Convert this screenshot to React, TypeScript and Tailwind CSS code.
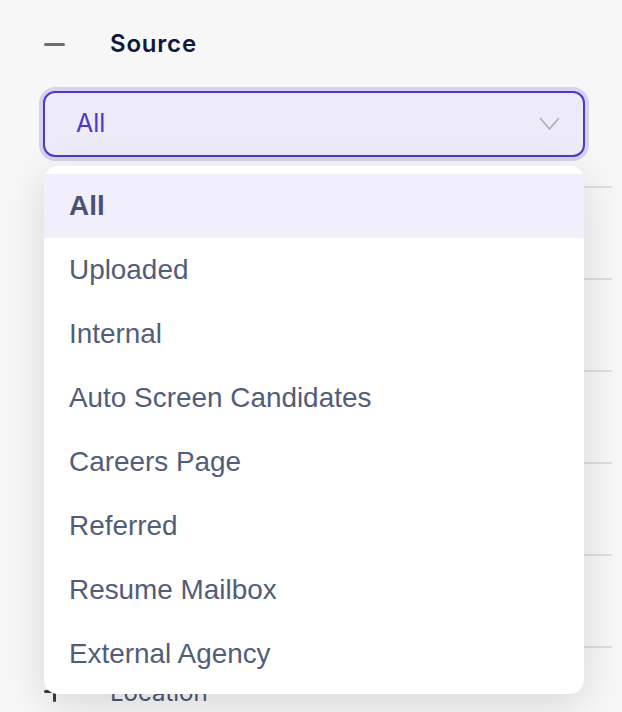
import React from "react";

const options = [
    "All",
    "Uploaded",
    "Internal",
    "Auto Screen Candidates",
    "Careers Page",
    "Referred",
    "Resume Mailbox",
    "External Agency",
];

// collapsed filter sections hidden under the open menu
const hiddenRows = 5;

function Chevron() {
    return (
        <svg width="21" height="14" viewBox="0 0 21 14" fill="none">
            <polyline
                points="1.5,1.5 10.5,12 19.5,1.5"
                stroke="#ababb6"
                strokeWidth="1.6"
                strokeLinecap="round"
                strokeLinejoin="round"
            />
        </svg>
    );
}

export default function App() {
    const selected = "All";

    return (
        <div className="h-[712px] overflow-hidden bg-[#f7f7f7] pl-[44px] pr-[10px] font-['Inter',sans-serif]">
            {/* header */}
            <div className="flex items-center h-[32px] pt-[28px] box-content">
                <div className="w-[66px] flex items-center">
                    <div className="w-[21px] h-[3px] rounded-full bg-[#6e6e6e]" />
                </div>
                <span className="text-[24px] font-semibold tracking-[0.8px] text-[#0e1a3d]">
                    Source
                </span>
            </div>

            {/* select + menu */}
            <div className="relative z-10 mt-[31px] -ml-[1px] w-[542px]">
                <button className="flex items-center justify-between w-full h-[66px] rounded-[12px] border-2 border-[#5436c7] bg-[#eeebf9] pl-[31px] pr-[23px] shadow-[0_0_0_4px_#d8d2ef]">
                    <span className="text-[25px] text-[#5237c8]">{selected}</span>
                    <Chevron />
                </button>

                <div className="absolute left-[1px] top-full mt-[9px] w-[540px] rounded-[14px] bg-white pt-[8px] pb-[8px] shadow-[0_10px_40px_rgba(0,0,0,0.13)] font-['Liberation_Sans',Arial,sans-serif]">
                    {options.map((opt, key) => {
                        const active = opt === selected;
                        return (
                            <div
                                key={key}
                                className={
                                    "flex items-center h-[64px] pl-[25px] text-[27.9px] " +
                                    (active
                                        ? "bg-[#f2effc] font-bold text-[#4a5471]"
                                        : "text-[#525d79]")
                                }
                            >
                                {opt}
                            </div>
                        );
                    })}
                </div>
            </div>

            {/* underlying filter list */}
            <div className="mt-[29px]">
                {Array.from({ length: hiddenRows }).map((_, key) => (
                    <div key={key} className="h-[92px] border-t-2 border-[#dedee2]" />
                ))}
                <div className="h-[92px] border-t-2 border-[#dedee2] flex items-center">
                    <div className="w-[66px]">
                        <div className="relative w-[21px] h-[21px] -mt-[4px]">
                            <div className="absolute left-0 top-[9px] w-[21px] h-[3px] rounded-full bg-[#3c3c3c]" />
                            <div className="absolute left-[9px] top-0 w-[3px] h-[21px] rounded-full bg-[#3c3c3c]" />
                        </div>
                    </div>
                    <span className="text-[24px] text-[#4b5573]">Location</span>
                </div>
            </div>
        </div>
    );
}
